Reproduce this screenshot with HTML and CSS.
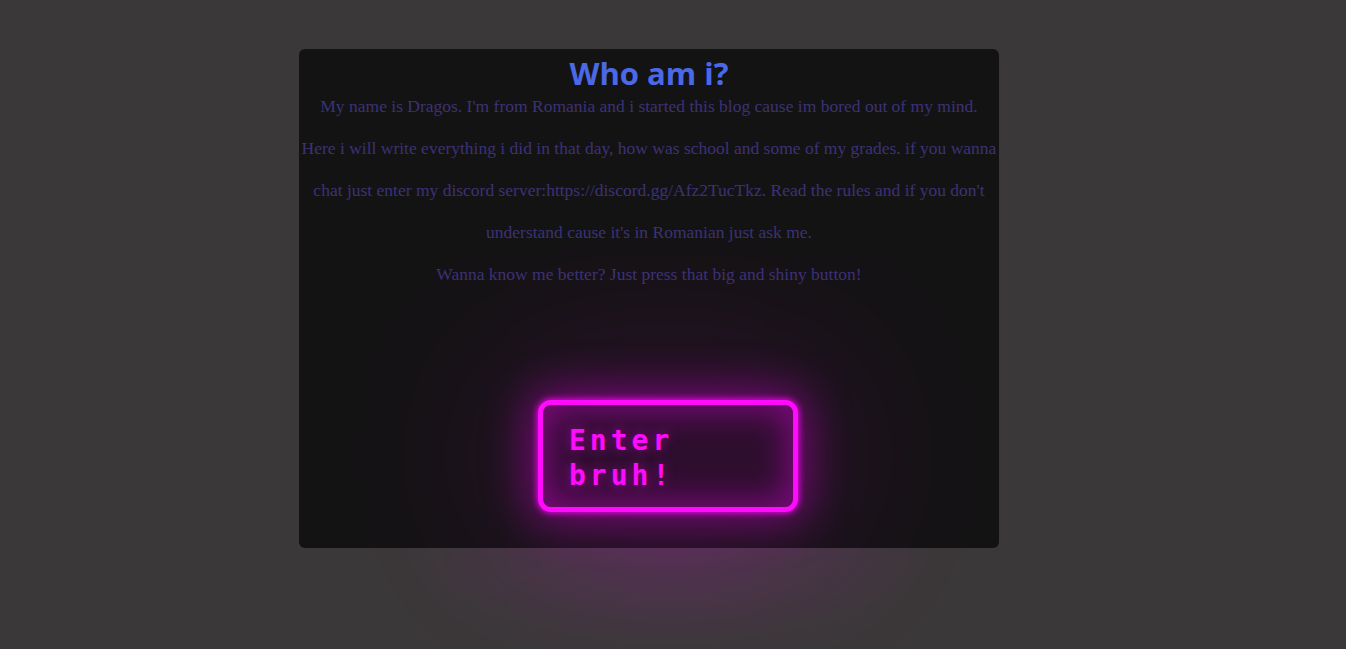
FILE: index.html
```html
<!DOCTYPE html>
<html lang="en">
<head>
<meta charset="utf-8">
<title>Who am i?</title>
<link rel="stylesheet" href="styles.css">
</head>
<body>
<div class="page">
  <main class="card">
    <h1 class="title">Who am i?</h1>
    <p class="about">My name is Dragos. I'm from Romania and i started this blog cause im bored out of my mind.<br>Here i will write everything i did in that day, how was school and some of my grades. if you wanna<br>chat just enter my discord server:https://discord.gg/Afz2TucTkz. Read the rules and if you don't<br>understand cause it's in Romanian just ask me.<br>Wanna know me better? Just press that big and shiny button!</p>
    <div class="actions">
      <a class="neon-button" href="#">Enter<br>bruh!</a>
    </div>
  </main>
</div>
</body>
</html>
```
FILE: styles.css
```css
html, body {
  margin: 0;
  padding: 0;
}
body {
  background: #3b3839;
  min-height: 100vh;
  overflow: hidden;
}
.page {
  padding: 49px 0 0 299px;
}
.card {
  width: 700px;
  height: 499px;
  box-sizing: border-box;
  background: #141314;
  border-radius: 6px;
  padding-top: 12px;
  display: flex;
  flex-direction: column;
  align-items: center;
}
.title {
  margin: 0;
  font-family: "Open Sans", "DejaVu Sans", sans-serif;
  font-weight: 700;
  font-size: 31px;
  line-height: 24px;
  color: #4b69e6;
}
.about {
  margin: 0;
  font-family: "Liberation Serif", serif;
  font-size: 17.5px;
  line-height: 42px;
  color: #3b3275;
  text-align: center;
  white-space: nowrap;
}
.actions {
  align-self: stretch;
  display: flex;
  padding: 105px 0 0 239px;
}
.neon-button {
  position: relative;
  display: block;
  width: 260px;
  height: 112px;
  box-sizing: border-box;
  padding: 18px 26px;
  border: 5px solid #ff0cff;
  border-radius: 13px;
  font-family: "DejaVu Sans Mono", monospace;
  font-weight: 700;
  font-size: 28px;
  line-height: 35px;
  letter-spacing: 4px;
  color: #ff0cff;
  text-decoration: none;
  background: #2e0e2e;
  text-shadow: 0 0 12px rgba(255, 0, 255, 0.5);
  box-shadow:
    inset 0 0 30px 8px rgba(255, 0, 255, 0.35),
    0 0 6px 1px rgba(255, 0, 255, 0.9),
    0 0 45px 10px rgba(255, 0, 255, 0.38),
    0 0 170px 40px rgba(255, 0, 255, 0.12);
}
.neon-button::before {
  content: "";
  position: absolute;
  pointer-events: none;
  z-index: -1;
  left: -130px;
  width: 520px;
  top: 68px;
  height: 170px;
  background: radial-gradient(ellipse closest-side, rgba(255, 0, 255, 0.08), rgba(255, 0, 255, 0.035) 55%, rgba(255, 0, 255, 0) 100%);
}
```
